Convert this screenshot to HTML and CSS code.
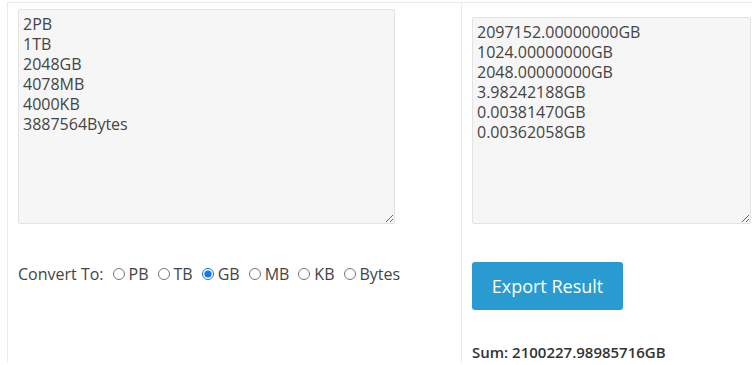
FILE: index.html
```html
<!DOCTYPE html>
<html lang="en">
<head>
    <meta charset="UTF-8">
    <meta name="viewport" content="width=device-width, initial-scale=1.0">
    <title>Data Size Converter</title>
    <link rel="stylesheet" href="styles.css">
</head>
<body>
    <div class="converter">
        <div class="col col-input">
            <textarea class="box box-input" id="sizes">2PB
1TB
2048GB
4078MB
4000KB
3887564Bytes</textarea>
            <div class="units">
                <span class="units-label">Convert To:</span>
                <label><input type="radio" name="unit" value="PB">PB</label>
                <label><input type="radio" name="unit" value="TB">TB</label>
                <label><input type="radio" name="unit" value="GB" checked>GB</label>
                <label><input type="radio" name="unit" value="MB">MB</label>
                <label><input type="radio" name="unit" value="KB">KB</label>
                <label><input type="radio" name="unit" value="Bytes">Bytes</label>
            </div>
        </div>
        <div class="col col-output">
            <textarea class="box box-output" id="result" readonly>2097152.00000000GB
1024.00000000GB
2048.00000000GB
3.98242188GB
0.00381470GB
0.00362058GB</textarea>
            <button class="export-btn">Export Result</button>
            <div class="sum">Sum: 2100227.98985716GB</div>
        </div>
    </div>
</body>
</html>
```

FILE: styles.css
```css
body {
    font-family: "Open Sans", Arial, sans-serif;
    color: #444;
    background-color: #fff;
    margin: 0;
}

.converter {
    display: flex;
    margin: 2px 0 0 7px;
    border-top: 1px solid #ebebeb;
    border-left: 1px solid #ebebeb;
}

.col {
    display: flex;
    flex-direction: column;
    align-items: flex-start;
}

.col-input {
    width: 443px;
    padding: 6px 0 0 10px;
    border-right: 1px solid #ebebeb;
}

.col-output {
    flex: 1;
    padding: 14px 0 0 10px;
}

.box {
    box-sizing: border-box;
    font-family: "Open Sans", Arial, sans-serif;
    font-size: 16px;
    line-height: 20px;
    color: #444;
    background-color: #f6f6f6;
    border: 1px solid #e3e3e3;
    border-radius: 2px;
    padding: 4px 4px;
    margin: 0;
    outline: none;
}

.box-input {
    width: 377px;
    height: 215px;
}

.box-output {
    width: 279px;
    height: 207px;
}

.units {
    display: flex;
    align-items: center;
    margin-top: 38px;
    font-size: 16px;
    line-height: 24px;
}

.units-label {
    margin-right: 9px;
}

.units label {
    display: flex;
    align-items: center;
    margin-right: 9px;
}

.units input[type="radio"] {
    width: 12px;
    height: 12px;
    margin: 0 4px 0 0;
    accent-color: #1a73e8;
}

.export-btn {
    margin-top: 38px;
    width: 151px;
    height: 48px;
    border: none;
    border-radius: 3px;
    background-color: #2a9bd0;
    color: #fff;
    font-family: "Open Sans", Arial, sans-serif;
    font-size: 18px;
    cursor: pointer;
}

.export-btn:hover {
    background-color: #2387b7;
}

.sum {
    margin-top: 31px;
    font-size: 15px;
    line-height: 22px;
    font-weight: 600;
    color: #333;
}
```
